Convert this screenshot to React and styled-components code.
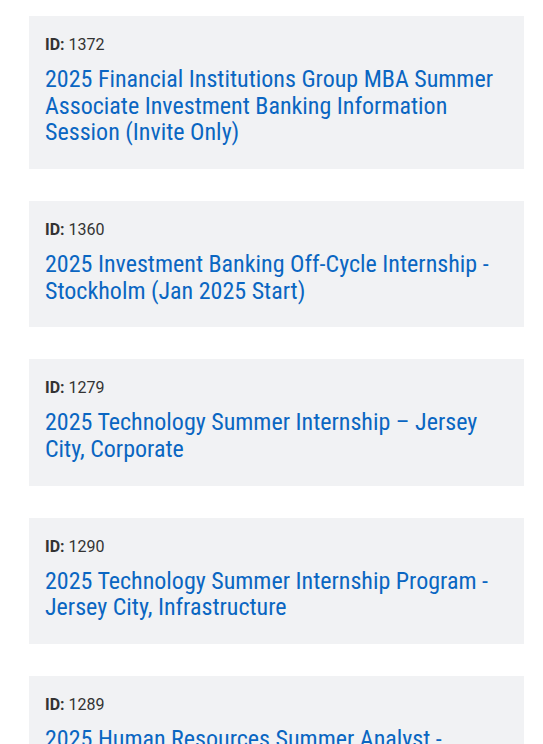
import React from "react";
import styled, { createGlobalStyle } from "styled-components";

const Global = createGlobalStyle`
  html, body { margin: 0; padding: 0; background: #ffffff; }
  body { font-family: "Roboto Condensed", Roboto, "Liberation Sans", sans-serif; }
`;

const List = styled.div`
  display: flex;
  flex-direction: column;
  gap: 32px;
  padding: 16px 19px 0 29px;
`;

const Card = styled.article`
  background: #f1f2f4;
  padding: 17px 16px 23px;
`;

const Meta = styled.div`
  font-family: Roboto, "Liberation Sans", sans-serif;
  font-size: 16px;
  line-height: 24px;
  color: #333333;
`;

const Label = styled.strong`
  font-weight: 700;
`;

const Title = styled.a`
  display: block;
  margin-top: 9px;
  font-family: "Roboto Condensed", Roboto, "Liberation Sans", sans-serif;
  font-size: 24px;
  line-height: 26.67px;
  color: #0a66c2;
  text-decoration: none;
`;

const items = [
  { id: 1372, title: "2025 Financial Institutions Group MBA Summer Associate Investment Banking Information Session (Invite Only)" },
  { id: 1360, title: "2025 Investment Banking Off-Cycle Internship - Stockholm (Jan 2025 Start)" },
  { id: 1279, title: "2025 Technology Summer Internship – Jersey City, Corporate" },
  { id: 1290, title: "2025 Technology Summer Internship Program - Jersey City, Infrastructure" },
  { id: 1289, title: "2025 Human Resources Summer Analyst - New\u00a0York" },
];

export default function App() {
  return (
    <>
      <Global />
      <List>
        {items.map((it) => (
          <Card key={it.id}>
            <Meta>
              <Label>ID:</Label> {it.id}
            </Meta>
            <Title href="#">{it.title}</Title>
          </Card>
        ))}
      </List>
    </>
  );
}
